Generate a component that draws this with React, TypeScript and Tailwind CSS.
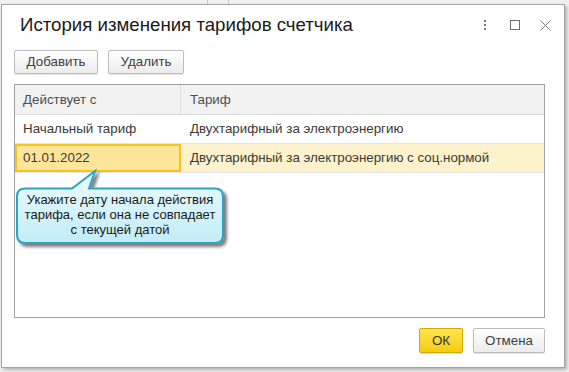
import React from 'react';

const rows = [
  { from: 'Начальный тариф', tariff: 'Двухтарифный за электроэнергию', selected: false },
  { from: '01.01.2022', tariff: 'Двухтарифный за электроэнергию с соц.нормой', selected: true },
];

function Callout() {
  return (
    <div className="absolute left-0 top-0 w-[569px] h-[372px] pointer-events-none">
      <svg width="569" height="372" className="absolute left-0 top-0">
        <defs>
          <linearGradient id="tipFill" x1="0" y1="0" x2="0" y2="1">
            <stop offset="0" stopColor="#ecfcff" />
            <stop offset="1" stopColor="#c2ecf7" />
          </linearGradient>
          <filter id="tipShadow" x="-10%" y="-20%" width="130%" height="150%">
            <feDropShadow dx="3" dy="3" stdDeviation="1.6" floodColor="#000" floodOpacity="0.5" />
          </filter>
        </defs>
        <path
          d="M25 188.5 L72 188.5 L95 171 L89 188.5 L215 188.5 Q223 188.5 223 196.5 L223 235 Q223 243 215 243 L25 243 Q17 243 17 235 L17 196.5 Q17 188.5 25 188.5 Z"
          fill="url(#tipFill)"
          stroke="#2ba4c4"
          strokeWidth="2"
          filter="url(#tipShadow)"
        />
      </svg>
      <div className="absolute left-[17px] top-[192px] w-[206px] text-center text-[13px] leading-[15px] text-[#1a1a1a]">
        Укажите дату начала действия
        <br />
        тарифа, если она не совпадает
        <br />с текущей датой
      </div>
    </div>
  );
}

export default function App() {
  return (
    <div
      className="relative w-[569px] h-[372px] overflow-hidden bg-[#f0f0f0]"
      style={{ fontFamily: '"Liberation Sans", Arial, sans-serif' }}
    >
      {/* strip of the window behind */}
      <div className="flex h-[4px]">
        <div className="w-[208px] border-r border-[#c6c6c6]" />
        <div className="w-[21px] border-r border-[#c6c6c6]" />
      </div>

      <div className="ml-px w-[564px] h-[364px] flex flex-col bg-white border border-[#a3a3a3] shadow-[2px_2px_3px_rgba(0,0,0,0.25)]">
        <div className="h-[40px] flex items-center pl-[18px] pr-[13px]">
          <h1 className="flex-1 text-[18.67px] text-[#1a1a1a] leading-none">История изменения тарифов счетчика</h1>
          <div className="flex items-center gap-[20px]">
            <div className="flex flex-col gap-[2px] items-center w-[10px]">
              <span className="w-[2px] h-[2px] bg-[#777]" />
              <span className="w-[2px] h-[2px] bg-[#777]" />
              <span className="w-[2px] h-[2px] bg-[#777]" />
            </div>
            <div className="w-[10px] h-[10px] border border-[#6d6d6d]" />
            <svg width="11" height="11" viewBox="0 0 11 11">
              <path d="M0.5 0.5 L10.5 10.5 M10.5 0.5 L0.5 10.5" stroke="#7a7a7a" strokeWidth="1" />
            </svg>
          </div>
        </div>

        <div className="mt-[5px] pl-[12px] flex gap-[10px]">
          <button className="h-[24px] w-[84px] rounded-[2px] border border-[#bdbdbd] bg-gradient-to-b from-white to-[#ececec] shadow-[0_1px_1px_rgba(0,0,0,0.12)] text-[13.33px] text-[#404040]">
            Добавить
          </button>
          <button className="h-[24px] w-[76px] rounded-[2px] border border-[#bdbdbd] bg-gradient-to-b from-white to-[#ececec] shadow-[0_1px_1px_rgba(0,0,0,0.12)] text-[13.33px] text-[#404040]">
            Удалить
          </button>
        </div>

        <div className="mt-[10px] ml-[12px] w-[531px] h-[234px] border border-[#a0a0a0] text-[13.33px]">
          <div className="flex h-[30px] bg-[#f2f2f2] border-b border-[#dcdcdc] text-[#4d4d4d]">
            <div className="w-[166px] border-r border-[#dcdcdc] flex items-center pl-[8px]">Действует с</div>
            <div className="flex-1 flex items-center pl-[9px]">Тариф</div>
          </div>
          {rows.map((r) => (
            <div
              key={r.from}
              className={`flex h-[29px] border-b border-[#e6e6e6] text-[#3a3a3a] ${r.selected ? 'bg-[#fdf2cc]' : ''}`}
            >
              <div
                className={`w-[166px] flex items-center ${
                  r.selected ? 'border-2 border-[#f7c41b] bg-[#fde59a] pl-[6px]' : 'pl-[8px]'
                }`}
              >
                {r.from}
              </div>
              <div className="flex-1 flex items-center pl-[9px]">{r.tariff}</div>
            </div>
          ))}
        </div>

        <div className="mt-[10px] pr-[19px] flex justify-end gap-[10px]">
          <button className="h-[25px] w-[44px] rounded-[2px] border border-[#d1a900] bg-gradient-to-b from-[#ffe44d] to-[#f6cc00] shadow-[0_1px_1px_rgba(0,0,0,0.15)] text-[13.33px] text-[#333]">
            ОК
          </button>
          <button className="h-[25px] w-[72px] rounded-[2px] border border-[#bdbdbd] bg-gradient-to-b from-white to-[#ececec] shadow-[0_1px_1px_rgba(0,0,0,0.12)] text-[13.33px] text-[#404040]">
            Отмена
          </button>
        </div>
      </div>

      <Callout />
    </div>
  );
}
